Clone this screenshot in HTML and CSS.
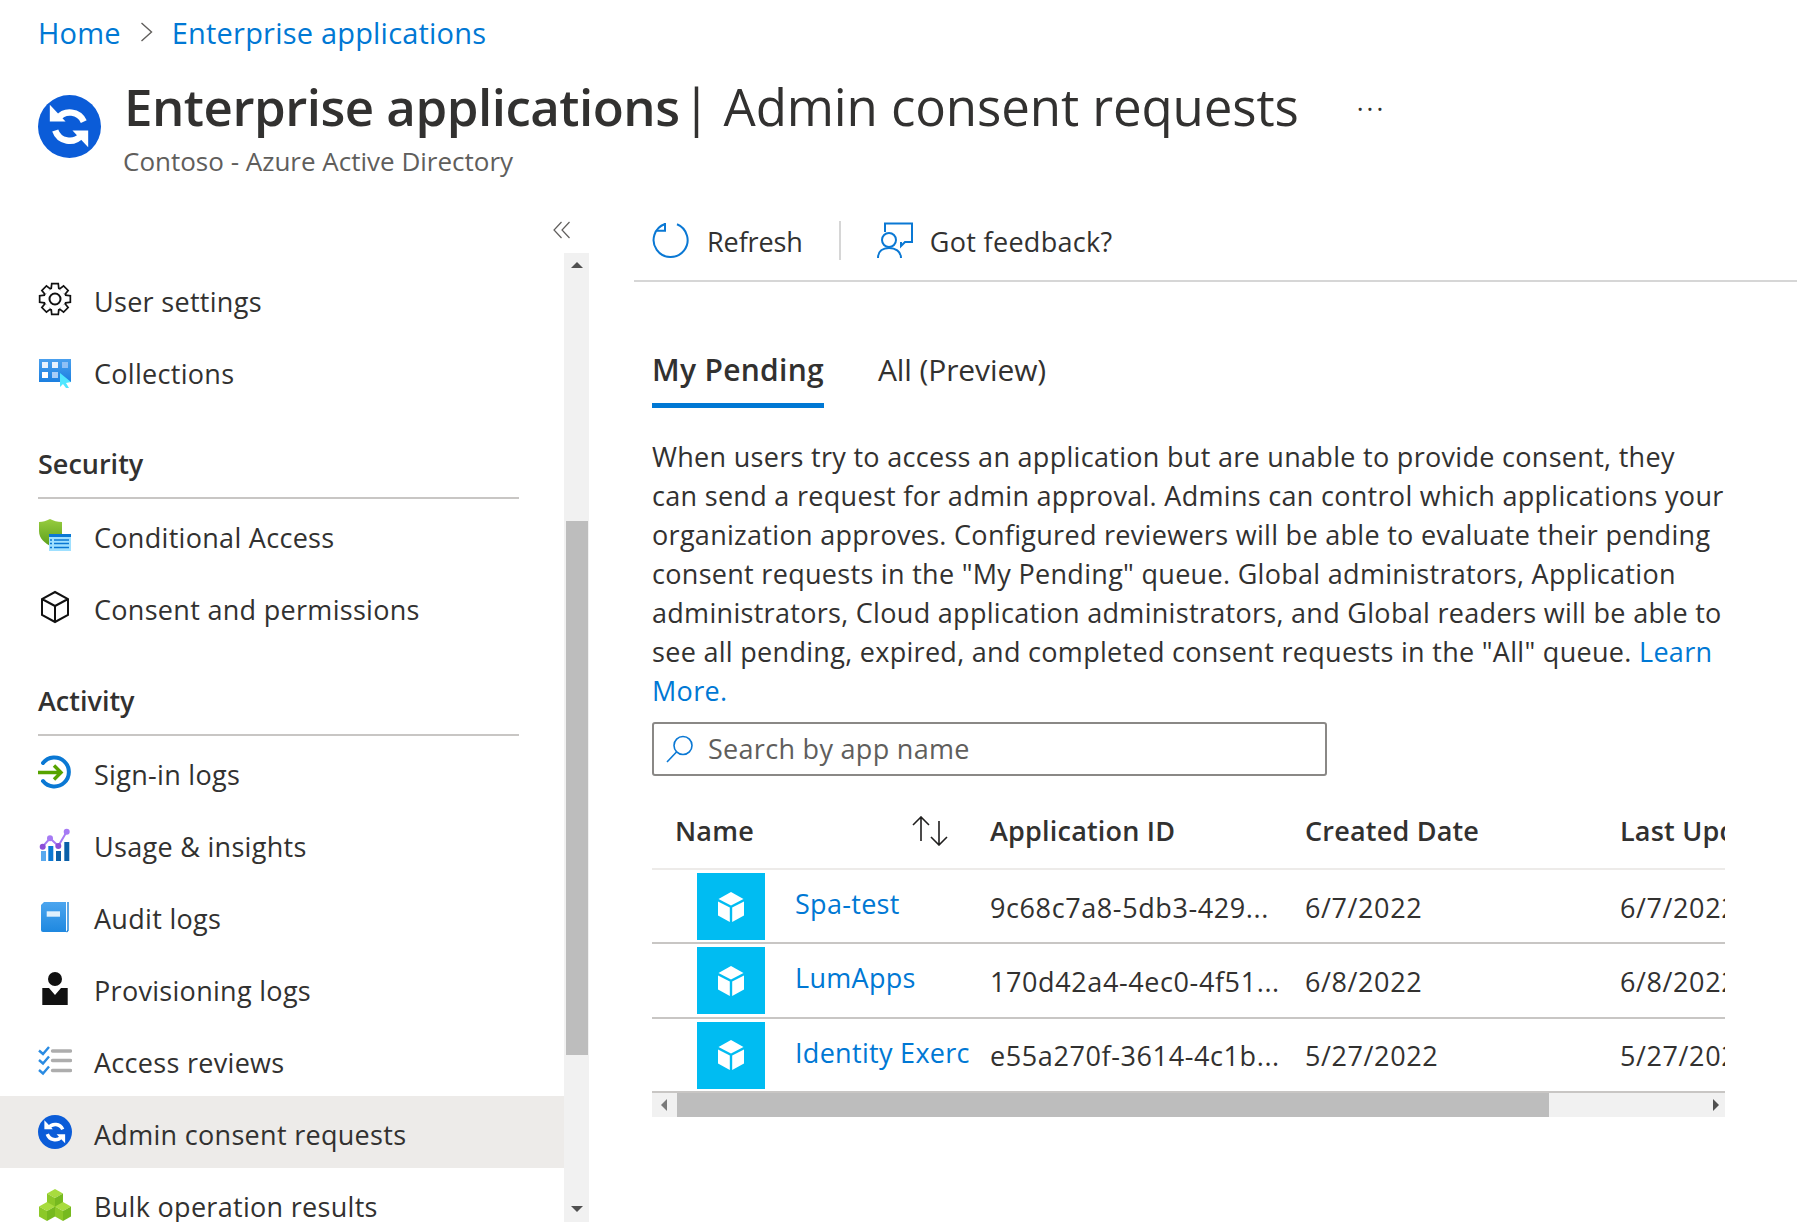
FILE: index.html
```html
<!DOCTYPE html>
<html lang="en">
<head>
<meta charset="utf-8">
<title>Enterprise applications | Admin consent requests</title>
<link rel="stylesheet" href="styles.css">
</head>
<body>
<svg class="defs" width="0" height="0" aria-hidden="true">
  <defs>
    <symbol id="sync" viewBox="0 0 64 64">
      <circle cx="32" cy="32" r="32" fill="#0b5cd8"/>
      <path d="M20 24A15.500 15.500 0 0 1 46.500 27" fill="none" stroke="#fff" stroke-width="6.500"/>
      <path d="M12 10L12 27H28Z" fill="#fff"/>
      <path d="M17.500 36A15.500 15.500 0 0 0 44 41" fill="none" stroke="#fff" stroke-width="6.500"/>
      <path d="M51 53L51 36H35Z" fill="#fff"/>
    </symbol>
    <symbol id="tilecube" viewBox="0 0 28 32">
      <path d="M14 1L26.500 8L14 14.500L1.500 8Z" fill="#fff"/>
      <path d="M1 10.500L12.800 16.500V31L1 24.500Z" fill="#fff"/>
      <path d="M27 10.500L15.200 16.500V31L27 24.500Z" fill="#fff"/>
    </symbol>
    <g id="gearshape">
      <circle cx="17" cy="17" r="10.500"/>
      <path d="M14 7L14.500 2.500H19.500L20 7Z"/>
      <path d="M14 7L14.500 2.500H19.500L20 7Z" transform="rotate(45 17 17)"/>
      <path d="M14 7L14.500 2.500H19.500L20 7Z" transform="rotate(90 17 17)"/>
      <path d="M14 7L14.500 2.500H19.500L20 7Z" transform="rotate(135 17 17)"/>
      <path d="M14 7L14.500 2.500H19.500L20 7Z" transform="rotate(180 17 17)"/>
      <path d="M14 7L14.500 2.500H19.500L20 7Z" transform="rotate(225 17 17)"/>
      <path d="M14 7L14.500 2.500H19.500L20 7Z" transform="rotate(270 17 17)"/>
      <path d="M14 7L14.500 2.500H19.500L20 7Z" transform="rotate(315 17 17)"/>
    </g>
    <g id="greencube">
      <path d="M17 2L25 6.500L17 11L9 6.500Z" fill="#a8dc3e"/>
      <path d="M9 6.500L17 11V21L9 16.500Z" fill="#8cc828"/>
      <path d="M25 6.500L17 11V21L25 16.500Z" fill="#76b91f"/>
    </g>
    <linearGradient id="gradCollect" x1="0" y1="0" x2="0" y2="1"><stop offset="0" stop-color="#4aa0ee"/><stop offset="1" stop-color="#1b7fe0"/></linearGradient>
    <linearGradient id="gradShield" x1="0" y1="0" x2="0" y2="1"><stop offset="0" stop-color="#97cc3f"/><stop offset="1" stop-color="#5a9e1a"/></linearGradient>
    <linearGradient id="gradBook" x1="0" y1="0" x2="0" y2="1"><stop offset="0" stop-color="#4ba5ef"/><stop offset="1" stop-color="#1e88e0"/></linearGradient>
  </defs>
</svg>

<nav class="crumbs">
  <a class="link" href="#">Home</a>
  <svg class="crumb-sep" viewBox="0 0 13 20"><path d="M1.500 1L11.500 10L1.500 19" fill="none" stroke="#605e5c" stroke-width="1.400"/></svg>
  <a class="link" href="#">Enterprise applications</a>
</nav>

<header class="head">
  <svg class="head-icon"><use href="#sync"/></svg>
  <div class="head-text">
    <div class="head-row">
      <h1 class="title"><b class="title-b">Enterprise applications</b><span class="pipe">|</span><span>Admin consent requests</span></h1>
      <span class="more">···</span>
    </div>
    <p class="sub">Contoso - Azure Active Directory</p>
  </div>
</header>

<main class="main">
  <aside class="side">
    <div class="collapse-row">
      <svg class="collapse" viewBox="0 0 18 18"><path d="M8.500 1L1 9L8.500 17M16.500 1L9 9L16.500 17" fill="none" stroke="#605e5c" stroke-width="1.200"/></svg>
    </div>
    <div class="side-body">
      <div class="nav">
        <a class="item">
          <svg class="ico" viewBox="0 0 34 34">
            <use href="#gearshape" fill="#111" stroke="#111" stroke-width="3.400"/>
            <use href="#gearshape" fill="#fff"/>
            <circle cx="17" cy="17" r="5.500" fill="none" stroke="#111" stroke-width="2"/>
          </svg>
          <span>User settings</span>
        </a>
        <a class="item">
          <svg class="ico" viewBox="0 0 34 34">
            <rect x="1" y="5" width="32" height="23" fill="url(#gradCollect)"/>
            <rect x="4" y="8" width="6" height="6" fill="#e8f2fd"/><rect x="14" y="8" width="6" height="6" fill="#e8f2fd"/><rect x="24" y="8" width="6" height="6" fill="#8fc0f5"/>
            <rect x="4" y="18" width="6" height="6" fill="#fff"/><rect x="14" y="18" width="6" height="6" fill="#a8cdf7"/>
            <path d="M22 19L33 28L28 29L31 34H28L25 30L22 33Z" fill="#50e6ff"/>
          </svg>
          <span>Collections</span>
        </a>
        <h2 class="group is-first">Security</h2>
        <a class="item">
          <svg class="ico" viewBox="0 0 34 34">
            <path d="M12 1C16 3 19 4 24 4V16L14 29C7 25 1 21 1 13V4C5 4 8 3 12 1Z" fill="url(#gradShield)"/>
            <rect x="11" y="16" width="22" height="17" fill="#9fe0ff"/>
            <rect x="11" y="16" width="22" height="3" fill="#0a78d4"/>
            <path d="M16 22H31M16 25.500H31M16 29.500H31M12 22H14M12 25.500H14M12 29.500H14" stroke="#0a78d4" stroke-width="1.300"/>
          </svg>
          <span>Conditional Access</span>
        </a>
        <a class="item">
          <svg class="ico" viewBox="0 0 34 34">
            <path d="M17 2L30 9V25L17 32L4 25V9ZM4 9L17 16L30 9M17 16V32" fill="none" stroke="#111" stroke-width="2"/>
          </svg>
          <span>Consent and permissions</span>
        </a>
        <h2 class="group">Activity</h2>
        <a class="item">
          <svg class="ico" viewBox="0 0 34 34">
            <path d="M5 8A14.500 14.500 0 1 1 5 26" fill="none" stroke="#0a78d4" stroke-width="4" stroke-linecap="round"/>
            <path d="M0 17.500H22.500M16 10.500L23 17.500L16 24.500" fill="none" stroke="#57a300" stroke-width="3.400"/>
          </svg>
          <span>Sign-in logs</span>
        </a>
        <a class="item">
          <svg class="ico" viewBox="0 0 34 34">
            <rect x="3" y="24" width="5" height="10" fill="#5aa9ee"/><rect x="10.300" y="19" width="5" height="15" fill="#0a78d4"/><rect x="18" y="24" width="5" height="10" fill="#0a5fa8"/><rect x="26.300" y="15" width="5" height="19" fill="#0a5fa8"/>
            <path d="M4.700 19.700L12 11.300L20.300 19L28.700 4.700" fill="none" stroke="#a67af4" stroke-width="2"/>
            <circle cx="4.700" cy="19.700" r="3" fill="#8c4fd8"/><circle cx="12" cy="11.300" r="3" fill="#a67af4"/><circle cx="20.300" cy="19" r="3" fill="#8c4fd8"/><circle cx="28.700" cy="4.700" r="3" fill="#a67af4"/>
          </svg>
          <span>Usage &amp; insights</span>
        </a>
        <a class="item">
          <svg class="ico" viewBox="0 0 34 34">
            <path d="M6 3H28V33H5A2 2 0 0 1 3 31V6Z" fill="url(#gradBook)"/>
            <path d="M30 3V31.500L28.500 33" fill="none" stroke="#0a78d4" stroke-width="1.300"/>
            <rect x="8.700" y="12.300" width="13.300" height="5.400" fill="#dff0fd"/>
          </svg>
          <span>Audit logs</span>
        </a>
        <a class="item">
          <svg class="ico" viewBox="0 0 34 34">
            <circle cx="17" cy="8" r="7" fill="#111"/>
            <path d="M4.300 17H11L17 24L23 17H29.700V34H4.300Z" fill="#111"/>
          </svg>
          <span>Provisioning logs</span>
        </a>
        <a class="item">
          <svg class="ico" viewBox="0 0 34 34">
            <path d="M1 7.500L5 11L11 4M1 17L5 20.500L11 13.500M1 27L5 30.500L11 23.500" fill="none" stroke="#2a8be2" stroke-width="2.400"/>
            <path d="M14.500 8H32.500M14.500 17.500H32.500M14.500 27.500H32.500" stroke="#adadad" stroke-width="3.400" stroke-linecap="round"/>
          </svg>
          <span>Access reviews</span>
        </a>
        <a class="item is-active">
          <svg class="ico" viewBox="0 0 34 34"><use href="#sync"/></svg>
          <span>Admin consent requests</span>
        </a>
        <a class="item">
          <svg class="ico" viewBox="0 0 34 34">
            <use href="#greencube"/>
            <use href="#greencube" x="-8" y="13"/>
            <use href="#greencube" x="8" y="13"/>
          </svg>
          <span>Bulk operation results</span>
        </a>
      </div>
      <div class="vscroll">
        <span class="arrow-up"></span>
        <span class="vthumb"></span>
        <span class="arrow-down"></span>
      </div>
    </div>
  </aside>

  <section class="content">
    <div class="toolbar">
      <button class="tool tool-refresh">
        <svg class="tool-ico" viewBox="0 0 37 38"><path d="M13 3A17 17 0 1 0 25 3.300" fill="none" stroke="#0a78d4" stroke-width="2"/><path d="M13 2V9.700H4.700" fill="none" stroke="#0a78d4" stroke-width="2"/></svg>
        <span>Refresh</span>
      </button>
      <span class="tool-sep"></span>
      <button class="tool tool-fb">
        <svg class="tool-ico" viewBox="0 0 37 38"><path d="M8 11V2.500H35V21H28L24 25V21" fill="none" stroke="#0a78d4" stroke-width="2"/><circle cx="12" cy="19" r="7" fill="#fff" stroke="#0a78d4" stroke-width="2"/><path d="M1 37C1 30 6 27 12 27S24 30 24 37" fill="none" stroke="#0a78d4" stroke-width="2"/></svg>
        <span>Got feedback?</span>
      </button>
    </div>

    <div class="body">
      <div class="tabs">
        <a class="tab is-on">My Pending</a>
        <a class="tab">All (Preview)</a>
      </div>

      <p class="intro">When users try to access an application but are unable to provide consent, they<br>can send a request for admin approval. Admins can control which applications your<br>organization approves. Configured reviewers will be able to evaluate their pending<br>consent requests in the "My Pending" queue. Global administrators, Application<br>administrators, Cloud application administrators, and Global readers will be able to<br>see all pending, expired, and completed consent requests in the "All" queue. <a class="link" href="#">Learn<br>More.</a></p>

      <label class="search">
        <svg class="search-ico" viewBox="0 0 28 28"><circle cx="17" cy="10.500" r="9" fill="none" stroke="#0a78d4" stroke-width="1.600"/><path d="M10.500 17L1 27" stroke="#0a78d4" stroke-width="1.600"/></svg>
        <span class="search-text">Search by app name</span>
      </label>

      <div class="table">
        <div class="row row-head">
          <div class="cell cell-name">
            <span>Name</span>
            <svg class="sort" viewBox="0 0 37 30"><path d="M10 25V1M2 9L10 1L18 9M28 5V29M20 21L28 29L36 21" fill="none" stroke="#201f1e" stroke-width="1.600"/></svg>
          </div>
          <div class="cell">Application ID</div>
          <div class="cell">Created Date</div>
          <div class="cell">Last Updated Date</div>
        </div>
        <div class="row">
          <div class="cell-app"><span class="tile"><svg class="tile-ico"><use href="#tilecube"/></svg></span><a class="link app-name">Spa-test</a></div>
          <div class="cell">9c68c7a8-5db3-429...</div>
          <div class="cell">6/7/2022</div>
          <div class="cell">6/7/2022</div>
        </div>
        <div class="row">
          <div class="cell-app"><span class="tile"><svg class="tile-ico"><use href="#tilecube"/></svg></span><a class="link app-name">LumApps</a></div>
          <div class="cell">170d42a4-4ec0-4f51...</div>
          <div class="cell">6/8/2022</div>
          <div class="cell">6/8/2022</div>
        </div>
        <div class="row">
          <div class="cell-app"><span class="tile"><svg class="tile-ico"><use href="#tilecube"/></svg></span><a class="link app-name">Identity Exerc</a></div>
          <div class="cell">e55a270f-3614-4c1b...</div>
          <div class="cell">5/27/2022</div>
          <div class="cell">5/27/2022</div>
        </div>
      </div>
      <div class="hscroll">
        <span class="arrow-left"></span>
        <span class="hthumb"></span>
        <span class="arrow-right"></span>
      </div>
    </div>
  </section>
</main>
</body>
</html>
```
FILE: styles.css
```css
* { box-sizing: border-box; }
html, body { margin: 0; height: 100%; }
body {
  width: 1797px;
  height: 1222px;
  overflow: hidden;
  background: #fff;
  color: #323130;
  font-family: "Open Sans", "Noto Sans", "Liberation Sans", sans-serif;
  font-size: 27px;
  letter-spacing: 0.3px;
}
.defs { position: absolute; }
.link { color: #0078d4; text-decoration: none; }

.crumbs { height: 64px; margin-bottom: 2px; padding-left: 38px; display: flex; align-items: center; gap: 19px; font-size: 29px; letter-spacing: 0.2px; }
.crumb-sep { width: 13px; height: 20px; }

.head { height: 144px; padding-left: 38px; display: flex; gap: 23px; }
.head-icon { width: 63px; height: 63px; margin-top: 29px; flex: none; }
.head-row { display: flex; align-items: center; height: 80px; }
.title { margin: 0; display: flex; font-size: 51px; font-weight: 400; line-height: 80px; letter-spacing: -0.1px; white-space: nowrap; }
.title-b { font-weight: 600; letter-spacing: -0.5px; }
.pipe { margin: 0 13px 0 3px; }
.more { margin-left: 58px; padding-top: 4px; font-size: 26px; letter-spacing: 3px; color: #323130; }
.sub { margin: -3px 0 0 -1px; font-size: 26px; color: #605e5c; line-height: 36px; letter-spacing: 0; }

.main { display: flex; gap: 45px; height: 1012px; }
.side { width: 589px; flex: none; display: flex; flex-direction: column; }
.collapse-row { height: 43px; flex: none; display: flex; justify-content: flex-end; align-items: center; padding-right: 18px; padding-bottom: 4px; }
.collapse { width: 18px; height: 18px; }
.side-body { display: flex; flex: 1; min-height: 0; }
.nav { width: 564px; flex: none; padding-top: 10px; overflow: hidden; }
.item { display: flex; align-items: center; gap: 22px; height: 72px; padding-left: 38px; white-space: nowrap; }
.item span { padding-top: 5px; }
.item.is-active { background: #edebe9; }
.ico { width: 34px; height: 34px; flex: none; }
.group { margin: 0 45px 0 38px; height: 93px; display: flex; align-items: flex-end; padding-bottom: 15px; font-size: 27px; font-weight: 600; letter-spacing: 0; border-bottom: 2px solid #c8c6c4; }
.group.is-first { height: 92px; }

.vscroll { width: 25px; flex: none; background: #f1f1f1; display: flex; flex-direction: column; align-items: center; }
.arrow-up { width: 0; height: 0; margin-top: 9px; border: 6px solid transparent; border-top: 0; border-bottom: 6px solid #505050; flex: none; }
.vthumb { width: 22px; height: 534px; margin-top: 253px; background: #bdbdbd; flex: none; }
.arrow-down { width: 0; height: 0; margin-top: 151px; border: 6px solid transparent; border-bottom: 0; border-top: 6px solid #505050; flex: none; }

.content { flex: 1; min-width: 0; }
.toolbar { height: 72px; padding: 0 0 10px 18px; display: flex; align-items: center; border-bottom: 2px solid #d6d6d6; }
.tool { display: flex; align-items: center; gap: 18px; padding: 0; border: 0; background: none; color: #323130; font: inherit; font-size: 27px; }
.tool span { padding-top: 2px; }
.tool-refresh { letter-spacing: -0.1px; }
.tool-fb { gap: 16px; letter-spacing: 0.3px; }
.tool-ico { width: 37px; height: 38px; flex: none; }
.tool-sep { width: 2px; height: 39px; margin: 0 36px 0 36px; background: #d6d6d6; }

.body { padding-left: 18px; }
.tabs { height: 126px; display: flex; gap: 54px; align-items: flex-end; }
.tab { height: 75px; line-height: 73px; font-size: 30px; color: #323130; letter-spacing: -0.1px; }
.tab.is-on { font-weight: 600; letter-spacing: 0.3px; border-bottom: 5px solid #0078d4; }

.intro { width: 1090px; margin: 29px 0 0; font-size: 27px; line-height: 39px; white-space: nowrap; letter-spacing: 0.3px; }

.search { width: 675px; height: 54px; margin-top: 12px; border: 2px solid #8a8886; border-radius: 3px; display: flex; align-items: center; gap: 14px; padding-left: 12px; color: #605e5c; }
.search-ico { width: 28px; height: 28px; flex: none; }
.search-text { padding-bottom: 2px; }

.table { width: 1073px; margin-top: 23px; overflow: hidden; }
.row { display: grid; grid-template-columns: repeat(4, 315px); width: 1260px; height: 74.3px; border-bottom: 2px solid #c8c6c4; letter-spacing: 0.6px; }
.row-head { height: 71px; font-weight: 600; letter-spacing: 0.2px; border-bottom-color: #edebe9; }
.row-head .cell { padding-bottom: 8px; }
.cell { padding: 2px 0 0 23px; white-space: nowrap; overflow: hidden; display: flex; align-items: center; }
.cell-name { justify-content: space-between; padding-right: 19px; }
.sort { width: 37px; height: 30px; flex: none; }
.cell-app { display: flex; gap: 30px; padding: 3px 0 0 45px; white-space: nowrap; letter-spacing: 0.3px; }
.tile { width: 68px; height: 67px; flex: none; background: #00bcf2; display: flex; align-items: center; justify-content: center; }
.tile-ico { width: 28px; height: 32px; }
.app-name { line-height: 61px; }

.hscroll { width: 1073px; height: 24px; background: #f1f1f1; display: flex; align-items: center; }
.arrow-left { width: 0; height: 0; margin-left: 9px; border: 6px solid transparent; border-left: 0; border-right: 6px solid #7a7a7a; flex: none; }
.hthumb { width: 872px; height: 24px; margin-left: 10px; background: #bdbdbd; flex: none; }
.arrow-right { width: 0; height: 0; margin-left: 164px; border: 6px solid transparent; border-right: 0; border-left: 6px solid #505050; flex: none; }
```
